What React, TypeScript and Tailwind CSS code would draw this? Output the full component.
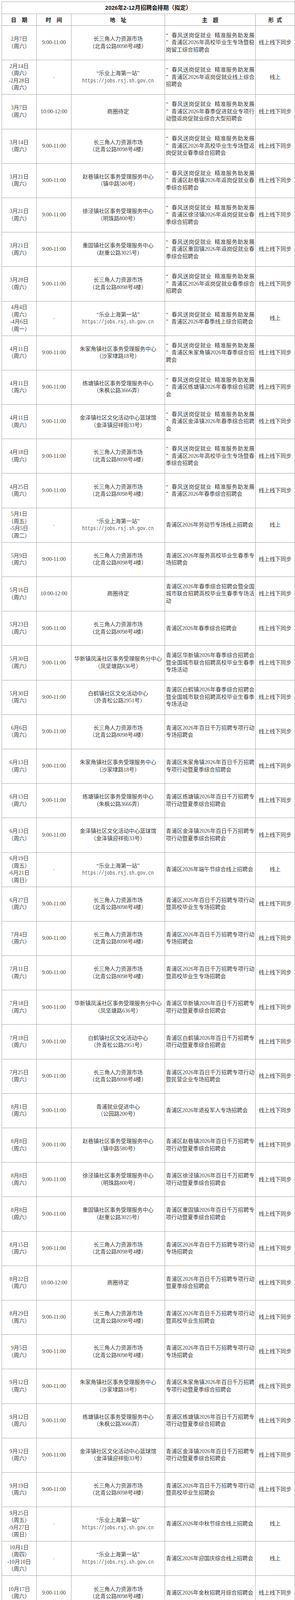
import React from "react";

const S = "（周六）";
const C = "“春风送岗促就业 精准服务助发展";
const F2 = "线上线下同步";
const F1 = "线上";

type Addr = string[] | "ONLINE";

const CSJ: Addr = ["长三角人力资源市场", "（北青公路8098号4楼）"];
const ONL: Addr = "ONLINE";
const SQ: Addr = ["商圈待定"];
const ZX: Addr = ["赵巷镇社区事务受理服务中心", "（镇中路580号）"];
const XJ: Addr = ["徐泾镇社区事务受理服务中心", "（明珠路800号）"];
const CG: Addr = ["重固镇社区事务受理服务中心", "（赵重公路3025号）"];
const ZJJ: Addr = ["朱家角镇社区事务受理服务中心", "（沙家埭路18号）"];
const LT: Addr = ["练塘镇社区事务受理服务中心", "（朱枫公路3666弄）"];
const JZ: Addr = ["金泽镇社区文化活动中心篮球馆", "（金泽镇迎祥街33号）"];
const HX: Addr = ["华新镇凤溪社区事务受理服务分中心", "（凤坚塘路636号）"];
const BH: Addr = ["白鹤镇社区文化活动中心", "（外青松公路2951号）"];
const JY: Addr = ["青浦就业促进中心", "（公园路200号）"];

const T = "9:00-11:00";
const T2 = "10:00-12:00";

type Row = [string[], string, Addr, string[], string];

const d = (s: string) => [s, S];

const rows: Row[] = [
  [d("2月7日"), T, CSJ, [C, "”青浦区2026年高校毕业生专场暨稳", "岗留工综合招聘会"], F2],
  [["2月14日", S, "-2月28日", S], "-", ONL, [C, "”青浦区2026年返岗促就业线上综合", "招聘会"], F1],
  [d("3月7日"), T2, SQ, [C, "”青浦区2026年春季促进就业专项行", "动暨返岗促就业综合大型招聘会"], F2],
  [d("3月14日"), T, CSJ, [C, "”青浦区2026年高校毕业生专场暨返", "岗促就业春季综合招聘会"], F2],
  [d("3月21日"), T, ZX, [C, "”青浦区赵巷镇2026年返岗促就业春", "季综合招聘会"], F2],
  [d("3月21日"), T, XJ, [C, "”青浦区徐泾镇2026年返岗促就业春", "季综合招聘会"], F2],
  [d("3月21日"), T, CG, [C, "”青浦区重固镇2026年返岗促就业春", "季综合招聘会"], F2],
  [d("3月28日"), T, CSJ, [C, "”青浦区2026年返岗促就业春季综合", "招聘会"], F2],
  [["4月4日", S, "-4月6日", "（周一）"], "-", ONL, [C, "”青浦区2026年春季线上综合招聘会"], F1],
  [d("4月11日"), T, ZJJ, [C, "”青浦区朱家角镇2026年春季综合招", "聘会"], F2],
  [d("4月11日"), T, LT, [C, "”青浦区练塘镇2026年春季综合招聘", "会"], F2],
  [d("4月11日"), T, JZ, [C, "”青浦区金泽镇2026年春季综合招聘", "会"], F2],
  [d("4月18日"), T, CSJ, [C, "”青浦区2026年高校毕业生专场暨春", "季综合招聘会"], F2],
  [d("4月25日"), T, CSJ, [C, "”青浦区2026年春季综合招聘会"], F2],
  [["5月1日", "（周五）", "-5月5日", "（周二）"], "-", ONL, ["青浦区2026年劳动节专场线上招聘会"], F1],
  [d("5月9日"), T, CSJ, ["青浦区2026年服务高校毕业生春季专", "场招聘会"], F2],
  [d("5月16日"), T2, SQ, ["青浦区2026年春季综合招聘会暨全国", "城市联合招聘高校毕业生春季专场活", "动"], F2],
  [d("5月23日"), T, CSJ, ["青浦区2026年春季综合招聘会"], F2],
  [d("5月30日"), T, HX, ["青浦区华新镇2026年春季综合招聘会", "暨全国城市联合招聘高校毕业生春季", "专场活动"], F2],
  [d("5月30日"), T, BH, ["青浦区白鹤镇2026年春季综合招聘会", "暨全国城市联合招聘高校毕业生春季", "专场活动"], F2],
  [d("6月6日"), T, CSJ, ["青浦区2026年百日千万招聘专项行动", "专场招聘会"], F2],
  [d("6月13日"), T, ZJJ, ["青浦区朱家角镇2026年百日千万招聘", "专项行动暨夏季综合招聘会"], F2],
  [d("6月13日"), T, LT, ["青浦区练塘镇2026年百日千万招聘专", "项行动暨夏季综合招聘会"], F2],
  [d("6月13日"), T, JZ, ["青浦区金泽镇2026年百日千万招聘专", "项行动暨夏季综合招聘会"], F2],
  [["6月19日", "（周五）", "-6月21日", "（周日）"], "-", ONL, ["青浦区2026年端午节综合线上招聘会"], F1],
  [d("6月27日"), T, CSJ, ["青浦区2026年百日千万招聘专项行动", "暨高校毕业生专场招聘会"], F2],
  [d("7月4日"), T, CSJ, ["青浦区2026年百日千万招聘专项行动", "专场招聘会"], F2],
  [d("7月11日"), T, CSJ, ["青浦区2026年百日千万招聘专项行动", "暨高校毕业生专场招聘会"], F2],
  [d("7月18日"), T, HX, ["青浦区华新镇2026年百日千万招聘专", "项行动暨夏季综合招聘会"], F2],
  [d("7月18日"), T, BH, ["青浦区白鹤镇2026年百日千万招聘专", "项行动暨夏季综合招聘会"], F2],
  [d("7月25日"), T, CSJ, ["青浦区2026年百日千万招聘专项行动", "暨民营企业专场招聘会"], F2],
  [d("8月1日"), T, JY, ["青浦区2026年退役军人专场招聘会"], F2],
  [d("8月8日"), T, ZX, ["青浦区赵巷镇2026年百日千万招聘专", "项行动暨夏季综合招聘会"], F2],
  [d("8月8日"), T, XJ, ["青浦区徐泾镇2026年百日千万招聘专", "项行动暨夏季综合招聘会"], F2],
  [d("8月8日"), T, CG, ["青浦区重固镇2026年百日千万招聘专", "项行动暨夏季综合招聘会"], F2],
  [d("8月15日"), T, CSJ, ["青浦区2026年百日千万招聘专项行动", "专场招聘会"], F2],
  [d("8月22日"), T2, SQ, ["青浦区2026年百日千万招聘专项行动", "暨夏季综合招聘会"], F2],
  [d("8月29日"), T, CSJ, ["青浦区2026年百日千万招聘专项行动", "暨高校毕业生招聘会"], F2],
  [d("9月5日"), T, CSJ, ["青浦区2026年百日千万招聘专项行动", "专场招聘会"], F2],
  [d("9月12日"), T, ZJJ, ["青浦区朱家角镇2026年百日千万招聘", "专项行动暨夏季综合招聘会"], F2],
  [d("9月12日"), T, LT, ["青浦区练塘镇2026年百日千万招聘专", "项行动暨夏季综合招聘会"], F2],
  [d("9月12日"), T, JZ, ["青浦区金泽镇2026年百日千万招聘专", "项行动暨夏季综合招聘会"], F2],
  [d("9月19日"), T, CSJ, ["青浦区2026年百日千万招聘专项行动", "暨高校毕业生招聘会"], F2],
  [["9月25日", "（周五）", "-9月27日", "（周日）"], "-", ONL, ["青浦区2026年中秋节综合线上招聘会"], F1],
  [["10月1日", "（周四）", "-10月10日", S], "-", ONL, ["青浦区2026年迎国庆综合线上招聘会"], F1],
  [d("10月17日"), T, CSJ, ["青浦区2026年金秋招聘月综合招聘会"], F2],
  [d("10月24日"), T, ZX, ["青浦区赵巷镇2026年金秋招聘月综合", "招聘会"], F2],
  [d("10月24日"), T, XJ, ["青浦区徐泾镇2026年金秋招聘月综合", "招聘会"], F2],
  [d("10月24日"), T, CG, ["青浦区重固镇2026年金秋招聘月综合", "招聘会"], F2],
  [d("10月31日"), T, CSJ, ["青浦区2026年秋季综合招聘会"], F2],
  [d("11月7日"), T, HX, ["青浦区华新镇2026年秋季综合招聘会"], F2],
  [d("11月7日"), T, BH, ["青浦区白鹤镇2026年秋季综合招聘会"], F2],
  [d("11月7日"), T, CSJ, ["青浦区2026年民营企业服务专场招聘", "会"], F2],
  [d("11月14日"), T, CSJ, ["青浦区2026年高校毕业生专场招聘会"], F2],
  [d("11月21日"), T, SQ, ["青浦区2026年秋季综合招聘会"], F2],
  [d("11月28日"), T, CSJ, ["青浦区2026年制造业专场招聘会"], F2],
  [d("12月5日"), T, CSJ, ["青浦区2026年冬季综合招聘会"], F2],
  [d("12月12日"), T, CSJ, ["青浦区2026年高校毕业生专场招聘会"], F2],
  [d("12月19日"), T, CSJ, ["青浦区2026年民营企业服务专场招聘", "会"], F2],
  [d("12月26日"), T, CSJ, ["青浦区2026年冬季综合招聘会"], F2],
];

function Txt({ s }: { s: string }) {
  const parts: React.ReactNode[] = [];
  let buf = "";
  let k = 0;
  const flush = () => {
    if (buf) {
      parts.push(<React.Fragment key={k++}>{buf}</React.Fragment>);
      buf = "";
    }
  };
  for (const ch of s) {
    if (ch === "“") {
      flush();
      parts.push(
        <span key={k++} className="inline-block w-[1em] text-right">
          “
        </span>
      );
    } else if (ch === "”") {
      flush();
      parts.push(
        <span key={k++} className="inline-block w-[1em] text-left">
          ”
        </span>
      );
    } else if (ch === " ") {
      flush();
      parts.push(<span key={k++} className="inline-block w-[0.5em]"></span>);
    } else {
      buf += ch;
    }
  }
  flush();
  return <>{parts}</>;
}

const base =
  "shrink-0 h-full overflow-hidden border-r border-b border-[#a3a3a3] flex flex-col justify-center";
const cc = base + " items-center text-center";

function Address({ a }: { a: Addr }) {
  if (a === "ONLINE") {
    return (
      <>
        <div className="h-[18.5px] whitespace-nowrap">
          <Txt s="“乐业上海第一站”" />
        </div>
        <div className="h-[18.5px] whitespace-nowrap">
          <span className="inline-block origin-center scale-x-[0.84] font-['Liberation_Mono',monospace] text-[14px] leading-[18.5px] text-[#555]">
            https://jobs.rsj.sh.gov.cn
          </span>
        </div>
      </>
    );
  }
  return (
    <>
      {a.map((l, i) => (
        <div key={i} className="h-[18.5px] whitespace-nowrap">
          {l}
        </div>
      ))}
    </>
  );
}

function DataRow({ r }: { r: Row }) {
  const [date, time, addr, theme, form] = r;
  return (
    <div className="flex h-[88.2px] overflow-hidden">
      <div className={cc + " w-[89px]"}>
        {date.map((l, i) => (
          <div key={i} className="h-[18.5px] whitespace-nowrap">
            {l}
          </div>
        ))}
      </div>
      <div className={cc + " w-[89px]"}>
        {time === "-" ? (
          <div className="h-[18.5px] text-[#9a9a9a]">-</div>
        ) : (
          <div className="h-[18.5px] whitespace-nowrap">{time}</div>
        )}
      </div>
      <div className={cc + " w-[240px]"}>
        <Address a={addr} />
      </div>
      <div className={base + " w-[232px] px-[2px] text-left"}>
        {theme.map((l, i) => (
          <div
            key={i}
            className={
              i < theme.length - 1
                ? "h-[18.5px] overflow-hidden text-justify [text-align-last:justify]"
                : "h-[18.5px] overflow-hidden whitespace-nowrap text-left"
            }
          >
            <Txt s={l} />
          </div>
        ))}
      </div>
      <div className={cc + " w-[101px]"}>
        <div className="h-[18.5px] whitespace-nowrap">{form}</div>
      </div>
    </div>
  );
}

const hdr =
  "shrink-0 h-full border-r border-b border-[#a3a3a3] flex items-center justify-center font-bold text-[#1e1e1e] whitespace-nowrap";

export default function App() {
  return (
    <div className="w-[756px] bg-white pt-[1px]">
      <div className="border-t border-[#e8e8e8] pl-[4px] pt-[2px]">
        <div className="w-[752px] border-l border-t border-[#a3a3a3] font-['Liberation_Serif','Noto_Sans_CJK_SC',serif] text-[14px] leading-[18.5px] text-[#3f3f3f]">
          <div className="flex h-[31px] items-center justify-center border-r border-b border-[#a3a3a3] font-['Liberation_Sans','Noto_Sans_CJK_SC',sans-serif] text-[14.5px] font-bold text-[#1a1a1a]">
            2026年2-12月招聘会排期（拟定）
          </div>
          <div className="flex h-[30px] font-['Noto_Sans_CJK_SC',sans-serif]">
            <div className={hdr + " w-[89px]"}>日　期</div>
            <div className={hdr + " w-[89px]"}>时　间</div>
            <div className={hdr + " w-[240px]"}>地　址</div>
            <div className={hdr + " w-[232px]"}>主　题</div>
            <div className={hdr + " w-[101px]"}>
              形<span className="inline-block w-[0.5em]"></span>式
            </div>
          </div>
          {rows.map((r, i) => (
            <DataRow key={i} r={r} />
          ))}
        </div>
      </div>
    </div>
  );
}
